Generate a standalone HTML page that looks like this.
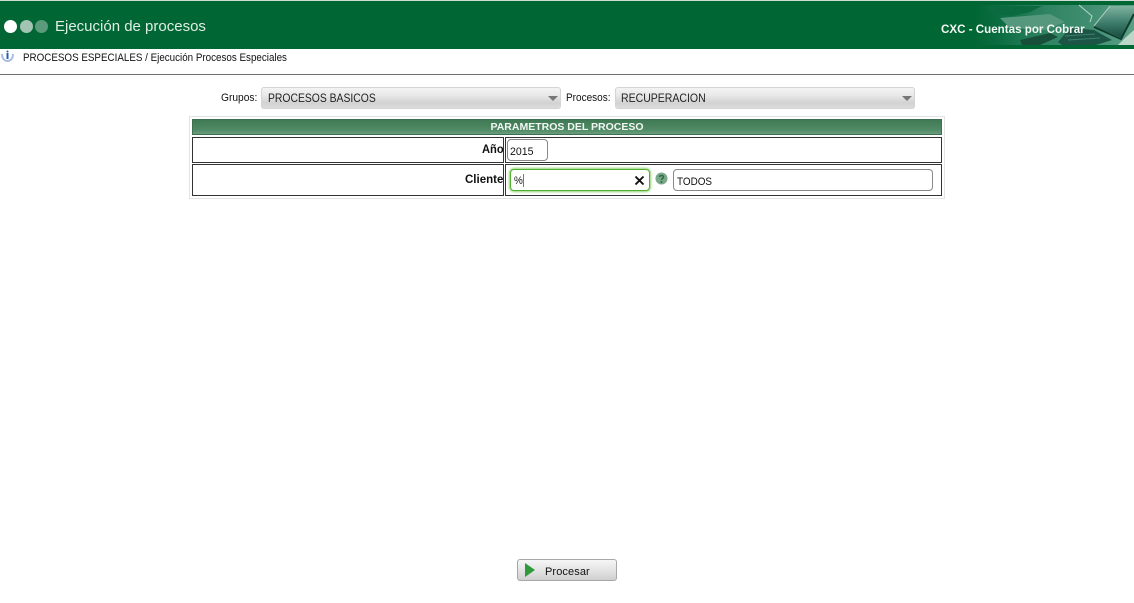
<!DOCTYPE html>
<html><head><meta charset="utf-8"><title>Ejecución de procesos</title>
<style>
html,body{margin:0;padding:0;background:#fff;width:1134px;height:603px;overflow:hidden}
body{position:relative;font-family:"Liberation Sans",sans-serif;color:#111}
.a{position:absolute;white-space:nowrap}
.t{font-size:11px;line-height:14px;transform-origin:0 50%}
.sel{position:absolute;box-sizing:border-box;height:22px;top:87px;border:1px solid #d4d4d4;border-radius:3px;background:linear-gradient(#f3f3f3 0,#e9e9e9 35%,#d2d2d2 75%,#dcdcdc 100%)}
.box{position:absolute;box-sizing:border-box;border:1px solid #333}
.inp{position:absolute;box-sizing:border-box;background:#fff;border:1px solid #888;border-radius:4px}
</style></head><body>
<div class="a" style="left:0;top:0;width:1134px;height:1px;background:#cfdcd4"></div>
<div class="a" style="left:0;top:1px;width:1134px;height:48px;background:#006633"></div>
<svg class="a" style="left:974px;top:0" width="160" height="49" viewBox="974 0 160 49">
<defs>
<linearGradient id="g" x1="0" x2="1" y1="0" y2="0"><stop offset="0" stop-color="#006633"/><stop offset=".15" stop-color="#0a6c40"/><stop offset=".45" stop-color="#2f8462"/><stop offset=".7" stop-color="#3f8d70"/><stop offset="1" stop-color="#5c9f86"/></linearGradient>
<linearGradient id="s" x1="0" x2="0" y1="0" y2="1"><stop offset="0" stop-color="#7fb3a0"/><stop offset=".5" stop-color="#3f7f6c"/><stop offset="1" stop-color="#164a3c"/></linearGradient>
</defs>
<rect x="974" y="5" width="160" height="40" fill="url(#g)"/>
<path d="M985 6H1042L1030 12 1012 16 992 13Z" fill="#0b6a3f"/>
<path d="M1000 18L1050 14 1065 22 1045 30 1010 28Z" fill="#56987d"/>
<path d="M1020 40L1050 33 1058 37 1040 45H1022Z" fill="#174f3a"/>
<path d="M1058 42L1070 28 1094 30 1112 40 1096 45H1062Z" fill="#1c5546"/>
<path d="M1065 36L1095 34M1068 40L1100 38" stroke="#3f7f6c" stroke-width="1"/>
<path d="M1079 5L1092 16 1090 22" fill="none" stroke="#bcd5ca" stroke-width="1"/>
<path d="M1094 26L1110 6H1134V17L1122 38Z" fill="url(#s)"/>
<path d="M1094 26L1110 6" stroke="#b7d2c6" stroke-width="1"/>
<path d="M1094 27L1121 39 1134 14" fill="none" stroke="#103c30" stroke-width="2"/>
<path d="M1125 38L1134 30V45H1118Z" fill="#bcd6c9"/>
</svg>
<div class="a" style="left:4px;top:20px;width:13px;height:13px;border-radius:50%;background:#fff"></div>
<div class="a" style="left:20px;top:20px;width:13px;height:13px;border-radius:50%;background:#a3c4b2"></div>
<div class="a" style="left:35px;top:20px;width:13px;height:13px;border-radius:50%;background:#5b9a7a"></div>
<div class="a" style="left:55px;top:18px;font-size:15px;line-height:18px;color:#dfeee6">Ejecución de procesos</div>
<div class="a" style="left:941px;top:23px;font-size:11.600px;line-height:14px;font-weight:bold;color:#f4f8f4">CXC - Cuentas por Cobrar</div>

<svg class="a" style="left:1px;top:50px" width="13" height="13" viewBox="0 0 13 13"><path d="M1 4C1 9 4 11 6.500 11S12 9 12 4" fill="none" stroke="#a9bde0" stroke-width="2"/><path d="M6.500 3V9" stroke="#2c5fa8" stroke-width="2"/><circle cx="6.500" cy="1.500" r="1" fill="#2c5fa8"/></svg>
<div class="a t" style="left:23px;top:51px;transform:scaleX(.892)">PROCESOS ESPECIALES / Ejecución Procesos Especiales</div>
<div class="a" style="left:0;top:74px;width:1134px;height:1px;background:#6f6f6f"></div>

<div class="a t" style="left:221px;top:91px;font-size:11px;transform:scaleX(.93)">Grupos:</div>
<div class="sel" style="left:261px;width:300px"></div>
<div class="a t" style="left:268px;top:91px;font-size:12px;color:#222;transform:scaleX(.864)">PROCESOS BASICOS</div>
<div class="a" style="left:548px;top:96px;width:0;height:0;border:5px solid transparent;border-top:5px solid #777;border-bottom:0"></div>
<div class="a t" style="left:566px;top:91px;font-size:11px;transform:scaleX(.91)">Procesos:</div>
<div class="sel" style="left:615px;width:300px"></div>
<div class="a t" style="left:621px;top:91px;font-size:12px;color:#222;transform:scaleX(.876)">RECUPERACION</div>
<div class="a" style="left:902px;top:96px;width:0;height:0;border:5px solid transparent;border-top:5px solid #777;border-bottom:0"></div>

<div class="a" style="left:189px;top:116px;width:754px;height:81px;border:1px solid #e4e4e4"></div>
<div class="a" style="left:192px;top:119px;width:750px;height:16px;background:linear-gradient(#3f7a55,#4f8a65 70%,#6a9c7d);border:1px solid #3d6f50;box-sizing:border-box"></div>
<div class="a" style="left:192px;top:120px;width:750px;text-align:center;font-weight:bold;font-size:10.500px;line-height:15px;color:#f2f7f3">PARAMETROS DEL PROCESO</div>
<div class="box" style="left:192px;top:137px;width:312px;height:26px"></div>
<div class="box" style="left:505px;top:137px;width:437px;height:26px"></div>
<div class="box" style="left:192px;top:164px;width:312px;height:32px"></div>
<div class="box" style="left:505px;top:164px;width:437px;height:32px"></div>
<div class="a t" style="left:482px;top:143px;font-size:11.500px;font-weight:bold;transform:scaleX(.97)">Año</div>
<div class="a t" style="left:465px;top:173px;font-size:11.500px;font-weight:bold">Cliente</div>

<div class="inp" style="left:507px;top:139px;width:41px;height:22px"></div>
<div class="a t" style="left:510px;top:145px;transform:scaleX(.96)">2015</div>
<div class="inp" style="left:510px;top:169px;width:140px;height:22px;border:1px solid #52b030;box-shadow:0 0 2px 1px #8ed070"></div>
<div class="a t" style="left:514px;top:174px;transform:scaleX(.9)">%</div>
<div class="a" style="left:523px;top:174px;width:1px;height:13px;background:#777"></div>
<svg class="a" style="left:634px;top:175px" width="11" height="11" viewBox="0 0 11 11"><path d="M1.500 1.500L9.500 9.500M9.500 1.500L1.500 9.500" stroke="#111" stroke-width="1.900"/></svg>
<svg class="a" style="left:655px;top:172px" width="13" height="13" viewBox="0 0 13 13"><circle cx="6.500" cy="6.500" r="6" fill="#7aa98a"/><path d="M4.500 5C4.500 3 8.500 3 8.500 5C8.500 6.500 6.500 6.500 6.500 8" fill="none" stroke="#2f6a48" stroke-width="1.500"/><circle cx="6.500" cy="10" r="1" fill="#2f6a48"/></svg>
<div class="inp" style="left:673px;top:169px;width:260px;height:22px"></div>
<div class="a t" style="left:677px;top:175px;transform:scaleX(.9)">TODOS</div>

<div class="a" style="left:517px;top:559px;width:100px;height:22px;box-sizing:border-box;border:1px solid #a8a8a8;border-radius:3px;background:linear-gradient(#f6f6f6,#e4e4e4 50%,#cfcfcf)"></div>
<svg class="a" style="left:524px;top:563px" width="12" height="14" viewBox="0 0 12 14"><path d="M1 0L11 7 1 14Z" fill="#2f9a3a"/></svg>
<div class="a t" style="left:545px;top:565px;letter-spacing:.1px">Procesar</div>
</body></html>
